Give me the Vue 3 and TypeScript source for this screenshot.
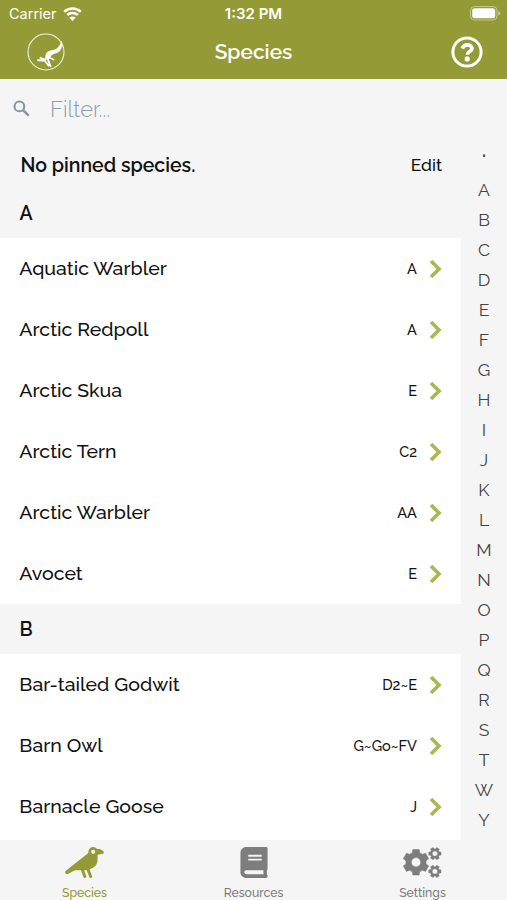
<script setup lang="ts">
interface Species { name: string; code: string }
interface Section { letter: string; species: Species[] }

const sections: Section[] = [
  {
    letter: 'A',
    species: [
      { name: 'Aquatic Warbler', code: 'A' },
      { name: 'Arctic Redpoll', code: 'A' },
      { name: 'Arctic Skua', code: 'E' },
      { name: 'Arctic Tern', code: 'C2' },
      { name: 'Arctic Warbler', code: 'AA' },
      { name: 'Avocet', code: 'E' },
    ],
  },
  {
    letter: 'B',
    species: [
      { name: 'Bar-tailed Godwit', code: 'D2~E' },
      { name: 'Barn Owl', code: 'G~Go~FV' },
      { name: 'Barnacle Goose', code: 'J' },
    ],
  },
]

const indexLetters = [...'·ABCDEFGHIJKLMNOPQRSTWY']

/** Outline of a six-toothed gear centred on (cx, cy), with a round hub. */
function gear(cx: number, cy: number, outer: number, root: number, hub: number, turn: number): string {
  const points: string[] = []
  for (let i = 0; i < 6; i++) {
    for (const [offset, r] of [[-21, root], [-14, outer], [14, outer], [21, root]]) {
      const a = ((i * 60 + turn + offset) * Math.PI) / 180
      points.push(`${(cx + r * Math.cos(a)).toFixed(2)} ${(cy + r * Math.sin(a)).toFixed(2)}`)
    }
  }
  return `M${points.join('L')}ZM${cx - hub} ${cy}a${hub} ${hub} 0 1 0 ${2 * hub} 0a${hub} ${hub} 0 1 0 ${-2 * hub} 0Z`
}

const gears = [
  gear(13, 15.3, 13.2, 10.2, 4.7, 30),
  gear(31.9, 6.6, 6.3, 4.7, 2.7, 0),
  gear(31.9, 24.4, 6.3, 4.7, 2.7, 0),
].join('')
</script>

<template>
  <div class="phone">
    <header>
      <div class="status">
        <div class="carrier">
          <span>Carrier</span>
          <svg width="19" height="14" viewBox="0 0 19 14">
            <path d="M1.2 4.9a12 12 0 0 1 16.6 0M4.2 8a7.7 7.7 0 0 1 10.6 0" fill="none" stroke="#fff" stroke-width="2.5" />
            <path d="M9.5 14L6.4 10.8a4.4 4.4 0 0 1 6.2 0Z" fill="#fff" />
          </svg>
        </div>
        <span class="time">1:32 PM</span>
        <svg class="battery" width="31" height="15" viewBox="0 0 31 15">
          <rect x=".5" y=".5" width="26.5" height="13.5" rx="4" fill="none" stroke="#fff" stroke-opacity=".45" />
          <rect x="2.2" y="2.2" width="23" height="10" rx="2.5" fill="#fff" />
          <path d="M28.3 5v4.5q2-.8 2-2.2T28.3 5Z" fill="#fff" fill-opacity=".5" />
        </svg>
      </div>
      <div class="nav">
        <svg class="logo" width="38" height="38" viewBox="0 0 38 38">
          <circle cx="19" cy="19" r="18" fill="none" stroke="#fff" stroke-opacity=".85" stroke-width="1.1" />
          <path d="M34.300 7.500C36 13 34.500 17.500 31 19.500C28.500 21 26 20.500 24.500 22.500L22 26L18.300 25.500C18 21.500 19.500 18.600 23.500 17.600C28.500 16.600 32.500 15.500 34.300 7.500Z" fill="#fff" />
          <path d="M20 24.500L17.500 27.500L11 27.300M17.500 26.500L13.500 24.800M20.500 25.500L23.500 33.200M18 28L21.500 32.500M22 24.500L26.500 26.500" fill="none" stroke="#fff" stroke-width="1.900" stroke-linecap="round" stroke-linejoin="round" />
        </svg>
        <h1>Species</h1>
        <svg class="help" width="32" height="32" viewBox="0 0 32 32">
          <circle cx="16" cy="16" r="14.100" fill="none" stroke="#fff" stroke-width="3" />
          <path d="M11.300 12.600Q12.700 8.900 16.200 8.900C19 8.900 21 10.500 21 12.600C21 15.700 16.300 15.500 16.300 18.700" fill="none" stroke="#fff" stroke-width="3.700" />
          <circle cx="16.200" cy="22.900" r="2.600" fill="#fff" />
        </svg>
      </div>
    </header>

    <label class="filter">
      <svg width="17" height="17" viewBox="0 0 17 17">
        <circle cx="6.400" cy="6.400" r="4.900" fill="none" stroke="#86939e" stroke-width="2" />
        <path d="M9.800 9.800L15.700 15.700" stroke="#86939e" stroke-width="2.400" />
      </svg>
      <span>Filter...</span>
    </label>

    <main>
      <div class="list">
        <div class="pinned">
          <strong>No pinned species.</strong>
          <span>Edit</span>
        </div>
        <section v-for="s in sections" :key="s.letter">
          <h2 :class="{ first: s.letter === 'A' }">{{ s.letter }}</h2>
          <div v-for="b in s.species" :key="b.name" class="row">
            <span class="name">{{ b.name }}</span>
            <span class="code">{{ b.code }}</span>
            <svg width="13" height="20" viewBox="0 0 13 20">
              <path d="M2 2L10 10L2 18" fill="none" stroke="#aab854" stroke-width="3.700" />
            </svg>
          </div>
        </section>
      </div>
      <nav class="index">
        <span v-for="l in indexLetters" :key="l">{{ l }}</span>
      </nav>
    </main>

    <footer>
      <div class="tab active">
        <svg width="39" height="31" viewBox="0 0 640 512">
          <path fill="currentColor" fill-rule="evenodd" d="M544 32h-16.400C513 12.700 490.100 0 464 0c-44.200 0-80 35.800-80 80v21L12.100 393.600A30.200 30.200 0 0 0 0 417.700c0 22.500 23.600 37.100 43.700 27L165.300 384h96.500l44.400 120.100c2.300 6.200 9.200 9.400 15.400 7.200l22.500-8.200c6.200-2.300 9.400-9.200 7.200-15.400L312.900 384H352c1.900 0 3.800-.2 5.700-.3l44.500 120.400c2.300 6.200 9.200 9.400 15.400 7.200l22.500-8.200c6.200-2.300 9.400-9.200 7.200-15.400l-44.600-120.500C495 343.400 536 281.600 536 208V128l88-16c10-3 16-8 16-16 0-35.300-43-64-96-64ZM464 114a34 34 0 1 1 0-68a34 34 0 0 1 0 68Z" />
        </svg>
        <span>Species</span>
      </div>
      <div class="tab">
        <svg width="28" height="31" viewBox="0 0 448 512">
          <path fill="currentColor" d="M448 360V24c0-13.300-10.700-24-24-24H96C43 0 0 43 0 96v320c0 53 43 96 96 96h328c13.300 0 24-10.700 24-24v-16c0-7.500-3.500-14.300-8.900-18.700-4.200-15.400-4.200-59.300 0-74.700 5.400-4.300 8.900-11.100 8.900-18.600zM128 134c0-3.300 2.700-6 6-6h212c3.300 0 6 2.700 6 6v20c0 3.300-2.700 6-6 6H134c-3.300 0-6-2.700-6-6v-20zm0 64c0-3.300 2.700-6 6-6h212c3.300 0 6 2.700 6 6v20c0 3.300-2.700 6-6 6H134c-3.300 0-6-2.700-6-6v-20zm253.400 250H96c-17.700 0-32-14.300-32-32 0-17.600 14.400-32 32-32h285.400c-1.900 17.100-1.900 46.900 0 64z" />
        </svg>
        <span>Resources</span>
      </div>
      <div class="tab">
        <svg width="39" height="31" viewBox="0 0 39 31">
          <path :d="gears" fill="currentColor" fill-rule="evenodd" stroke="currentColor" stroke-width=".5" stroke-linejoin="round" />
        </svg>
        <span>Settings</span>
      </div>
    </footer>
  </div>
</template>

<style>
body { margin: 0; }
</style>

<style scoped>
.phone {
  width: 507px;
  height: 900px;
  display: flex;
  flex-direction: column;
  overflow: hidden;
  background: #f5f5f5;
  color: #111;
  font-family: Raleway, Lato, sans-serif;
}
svg { display: block; flex: none; }
header { height: 79px; flex: none; background: #949a35; color: #fff; }
.status {
  height: 27px;
  display: grid;
  grid-template-columns: 1fr auto 1fr;
  align-items: center;
  padding: 0 6px;
  font-family: Inter, sans-serif;
  font-size: 14.500px;
}
.carrier { display: flex; align-items: center; gap: 6px; margin-left: 3px; }
.time { font-size: 15px; font-weight: 600; }
.battery { justify-self: end; }
.nav {
  height: 50px;
  display: grid;
  grid-template-columns: 1fr auto 1fr;
  align-items: center;
  padding: 0 24px;
}
.logo { margin-left: 3px; }
h1 { margin: 0; font-size: 20.900px; line-height: 28px; font-weight: 600; }
.help { justify-self: end; }
.filter {
  height: 59px;
  flex: none;
  display: flex;
  align-items: center;
  gap: 20px;
  padding-left: 13px;
  color: #8f9ca6;
  font-size: 22px;
  font-weight: 300;
}
main { flex: 1; min-height: 0; display: flex; overflow: hidden; }
.list { width: 461px; background: #fff; }
.pinned {
  height: 54px;
  display: flex;
  align-items: center;
  justify-content: space-between;
  padding: 0 19px 0 20.500px;
  font-size: 19.500px;
  background: #f5f5f5;
}
.pinned strong { font-weight: 600; }
.pinned span { font-size: 17.300px; font-weight: 500; }
h2 {
  height: 50px;
  margin: 0;
  padding-left: 19.500px;
  font-size: 19.500px;
  line-height: 52px;
  font-weight: 600;
  background: #f5f5f5;
}
h2.first { height: 46px; line-height: 44px; }
.row {
  height: 61px;
  display: flex;
  align-items: center;
  padding: 0 19px 0 19.300px;
  background: #fff;
}
.name { flex: 1; font-size: 19.500px; line-height: 25px; font-weight: 500; }
.code { margin-right: 12px; font-size: 14.600px; font-weight: 500; }
.index {
  width: 46px;
  display: flex;
  flex-direction: column;
  align-items: center;
  padding-top: 2px;
  font-size: 17.500px;
  font-weight: 400;
  color: #444;
}
.index span { height: 30px; flex: none; line-height: 30px; }
.index span:first-child { height: 35px; font-weight: 700; }
footer { height: 60px; flex: none; display: grid; grid-template-columns: repeat(3, 1fr); }
.tab {
  display: flex;
  flex-direction: column;
  align-items: center;
  padding-top: 7px;
  gap: 7px;
  color: #7d7d7d;
  font-size: 12.200px;
  font-weight: 500;
  line-height: 16px;
}
.active { color: #949a35; }
</style>
